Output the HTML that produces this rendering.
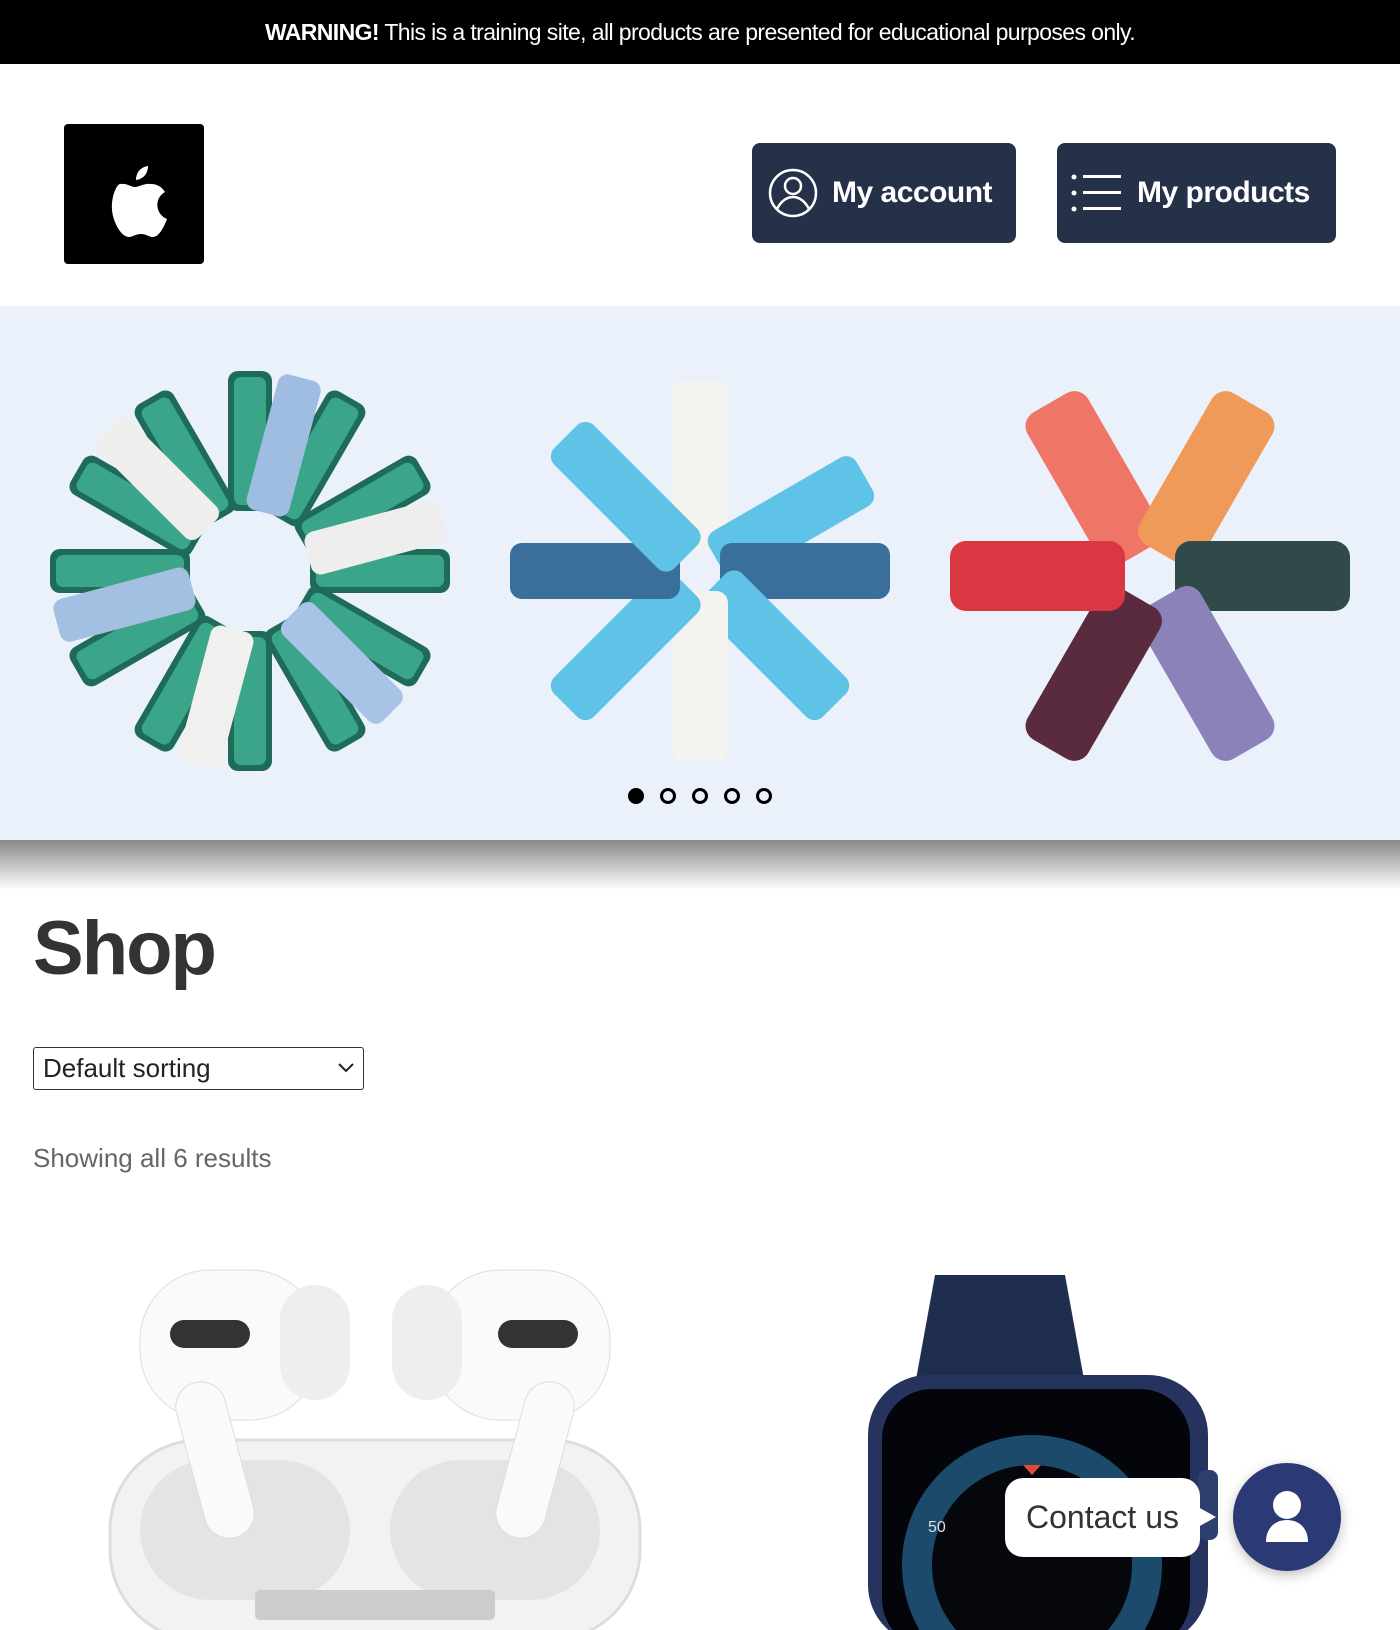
<!DOCTYPE html>
<html><head><meta charset="utf-8"><style>
*{margin:0;padding:0;box-sizing:border-box}
body{width:1400px;height:1630px;overflow:hidden;background:#fff;font-family:"Liberation Sans",sans-serif;position:relative}
.warn{height:64px;background:#000;color:#fff;text-align:center;font-size:23px;line-height:64px;letter-spacing:-0.6px}
.logo{position:absolute;left:64px;top:124px;width:140px;height:140px;background:#000;border-radius:4px}
.btn{position:absolute;top:143px;height:100px;background:#253149;border-radius:8px;color:#fff;font-weight:bold;font-size:30px;line-height:100px;letter-spacing:-0.5px}
.hero{position:absolute;left:0;top:306px;width:1400px;height:534px;background:#ebf1fa}
.shadow{position:absolute;left:0;top:840px;width:1400px;height:50px;background:linear-gradient(#888,#fff)}
h1{position:absolute;left:33px;top:905px;font-size:76px;color:#333;letter-spacing:-2px}
.sel{position:absolute;left:33px;top:1047px;width:331px;height:43px;border:1.5px solid #333;border-radius:3px;font-size:26px;line-height:40px;padding-left:9px;color:#222}
.show{position:absolute;left:33px;top:1143px;font-size:26px;color:#666}
.dot{position:absolute;top:788px;width:16px;height:16px;border-radius:50%;border:3px solid #000}
</style></head><body>
<div class="warn"><b>WARNING!</b> This is a training site, all products are presented for educational purposes only.</div>
<div class="logo"><svg width="140" height="140" viewBox="0 0 140 140"><g fill="#fff"><path d="M56 60c7-1 11 3 15 3s9-4 16-3c6 0 11 3 14 8-11 6-10 22 2 27-3 8-8 18-14 18-5 0-6-3-12-3s-8 3-12 3c-8 0-16-15-17-27-1-12 4-25 8-26z"/><path d="M72 56c0-8 5-13 12-14 0 8-5 13-12 14z"/></g></svg></div>
<div class="btn" style="left:752px;width:264px"><svg style="position:absolute;left:16px;top:25px" width="50" height="50" viewBox="0 0 50 50" fill="none" stroke="#fff" stroke-width="2.5"><circle cx="25" cy="25" r="23"/><circle cx="25" cy="18" r="8"/><path d="M9 41c4-8 10-12 16-12s12 4 16 12"/></svg><span style="position:absolute;left:80px">My account</span></div>
<div class="btn" style="left:1057px;width:279px"><svg style="position:absolute;left:14px;top:30px" width="52" height="40" viewBox="0 0 52 40" fill="#fff"><circle cx="3" cy="4" r="2.5"/><circle cx="3" cy="20" r="2.5"/><circle cx="3" cy="36" r="2.5"/><rect x="12" y="2" width="38" height="3"/><rect x="12" y="18" width="38" height="3"/><rect x="12" y="34" width="38" height="3"/></svg><span style="position:absolute;left:80px">My products</span></div>
<div class="hero"><svg width="1400" height="534">
<g transform="translate(250,265)">
<g id="r1"><rect x="-22" y="-200" width="44" height="140" rx="10" fill="#1f6b5a"/><rect x="-16" y="-194" width="32" height="128" rx="7" fill="#3ba58a"/></g>
<use href="#r1" transform="rotate(30)"/><use href="#r1" transform="rotate(60)"/><use href="#r1" transform="rotate(90)"/><use href="#r1" transform="rotate(120)"/><use href="#r1" transform="rotate(150)"/><use href="#r1" transform="rotate(180)"/><use href="#r1" transform="rotate(210)"/><use href="#r1" transform="rotate(240)"/><use href="#r1" transform="rotate(270)"/><use href="#r1" transform="rotate(300)"/><use href="#r1" transform="rotate(330)"/>
<rect x="-22" y="-200" width="44" height="140" rx="10" fill="#9fbde0" transform="rotate(15)"/><rect x="-22" y="-200" width="44" height="140" rx="10" fill="#eee" transform="rotate(75)"/><rect x="-22" y="-200" width="44" height="140" rx="10" fill="#a9c3e6" transform="rotate(135)"/><rect x="-22" y="-200" width="44" height="140" rx="10" fill="#f0f0ee" transform="rotate(195)"/><rect x="-22" y="-200" width="44" height="140" rx="10" fill="#a3bfe2" transform="rotate(255)"/><rect x="-22" y="-200" width="44" height="140" rx="10" fill="#eeeeec" transform="rotate(315)"/>
</g>
<g transform="translate(700,265)">
<rect x="-28" y="-190" width="56" height="170" rx="12" fill="#f4f3ef"/><rect x="-28" y="-190" width="56" height="170" rx="12" fill="#5fc3e8" transform="rotate(60)"/><rect x="-28" y="-190" width="56" height="170" rx="12" fill="#3a6f9c" transform="rotate(90)"/><rect x="-28" y="-190" width="56" height="170" rx="12" fill="#5fc3e8" transform="rotate(135)"/><rect x="-28" y="-190" width="56" height="170" rx="12" fill="#f4f3ef" transform="rotate(180)"/><rect x="-28" y="-190" width="56" height="170" rx="12" fill="#5fc3e8" transform="rotate(225)"/><rect x="-28" y="-190" width="56" height="170" rx="12" fill="#3a6f9c" transform="rotate(270)"/><rect x="-28" y="-190" width="56" height="170" rx="12" fill="#5fc3e8" transform="rotate(315)"/>
</g>
<g transform="translate(1150,270)">
<rect x="-35" y="-200" width="70" height="175" rx="16" fill="#ef7566" transform="rotate(-30)"/><rect x="-35" y="-200" width="70" height="175" rx="16" fill="#f09a5a" transform="rotate(30)"/><rect x="-35" y="-200" width="70" height="175" rx="16" fill="#2f4a48" transform="rotate(90)"/><rect x="-35" y="-200" width="70" height="175" rx="16" fill="#8a82b8" transform="rotate(150)"/><rect x="-35" y="-200" width="70" height="175" rx="16" fill="#5a2b3f" transform="rotate(210)"/><rect x="-35" y="-200" width="70" height="175" rx="16" fill="#d93843" transform="rotate(270)"/>
</g>
</svg>
<div class="dot" style="left:628px;background:#000;top:482px"></div><div class="dot" style="left:660px;top:482px"></div><div class="dot" style="left:692px;top:482px"></div><div class="dot" style="left:724px;top:482px"></div><div class="dot" style="left:756px;top:482px"></div>
</div>
<div class="shadow"></div>
<h1>Shop</h1>
<div class="sel">Default sorting<svg style="position:absolute;right:8px;top:14px" width="18" height="12" viewBox="0 0 18 12"><path d="M2 2l7 7 7-7" fill="none" stroke="#222" stroke-width="2"/></svg></div>
<div class="show">Showing all 6 results</div>
<svg style="position:absolute;left:100px;top:1260px" width="550" height="370"><rect x="10" y="180" width="530" height="200" rx="90" fill="#f2f2f2" stroke="#ddd" stroke-width="3"/><rect x="40" y="200" width="210" height="140" rx="70" fill="#e4e4e4"/><rect x="290" y="200" width="210" height="140" rx="70" fill="#e4e4e4"/><rect x="40" y="10" width="180" height="150" rx="70" fill="#fafafa" stroke="#ddd"/><rect x="330" y="10" width="180" height="150" rx="70" fill="#fafafa" stroke="#ddd"/><rect x="70" y="60" width="80" height="28" rx="14" fill="#333"/><rect x="398" y="60" width="80" height="28" rx="14" fill="#333"/><rect x="180" y="25" width="70" height="115" rx="35" fill="#eee"/><rect x="292" y="25" width="70" height="115" rx="35" fill="#eee"/><rect x="90" y="120" width="50" height="160" rx="25" fill="#fafafa" stroke="#ddd" transform="rotate(-15 115 200)"/><rect x="410" y="120" width="50" height="160" rx="25" fill="#fafafa" stroke="#ddd" transform="rotate(15 435 200)"/><rect x="155" y="330" width="240" height="30" rx="5" fill="#ccc"/></svg>
<svg style="position:absolute;left:860px;top:1265px" width="360" height="365"><path d="M75 10h130l20 110H55z" fill="#1f2d4f"/><rect x="8" y="110" width="340" height="270" rx="60" fill="#26335e"/><rect x="22" y="124" width="308" height="260" rx="50" fill="#04050a"/><circle cx="172" cy="300" r="130" fill="#1b4a6b"/><circle cx="172" cy="300" r="100" fill="#05070c"/><path d="M163 200h18l-9 10z" fill="#e04c3c"/><text x="68" y="267" fill="#ddd" font-size="16" font-family="Liberation Sans">50</text><rect x="338" y="205" width="20" height="70" rx="8" fill="#2d3f6e"/></svg>
<div style="position:absolute;left:1005px;top:1478px;width:195px;height:79px;background:#fff;border-radius:18px;font-size:32px;line-height:79px;text-align:center;color:#333">Contact us</div>
<svg style="position:absolute;left:1198px;top:1502px" width="20" height="30"><path d="M0 5l18 10L0 25z" fill="#fff"/></svg>
<div style="position:absolute;left:1233px;top:1463px;width:108px;height:108px;border-radius:50%;background:#2b3a74;box-shadow:0 4px 12px rgba(0,0,0,.25)"><svg width="108" height="108" viewBox="0 0 108 108" fill="#fff"><circle cx="54" cy="42" r="14"/><path d="M33 79c0-14 9-22 21-22s21 8 21 22z"/></svg></div>
</body></html>
